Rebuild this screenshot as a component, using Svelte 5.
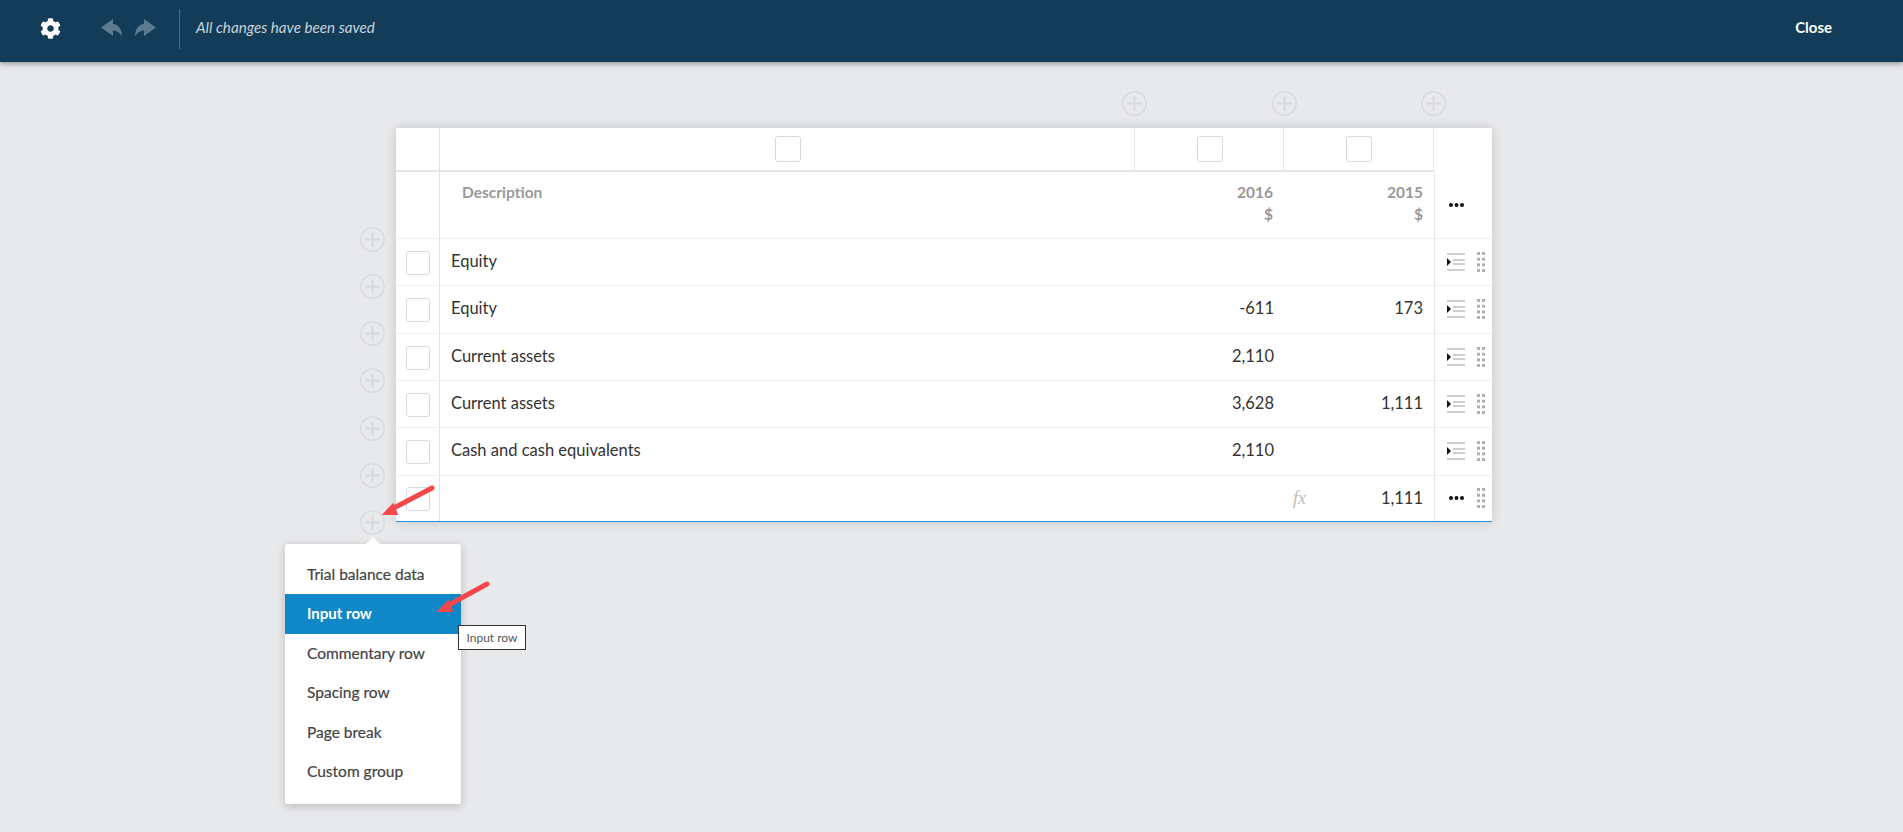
<script>
  const rows = [
    { label: 'Equity', a: '', b: '' },
    { label: 'Equity', a: '-611', b: '173' },
    { label: 'Current assets', a: '2,110', b: '' },
    { label: 'Current assets', a: '3,628', b: '1,111' },
    { label: 'Cash and cash equivalents', a: '2,110', b: '' },
    { label: '', a: '', b: '1,111', total: true }
  ];
  const menu = ['Trial balance data', 'Input row', 'Commentary row', 'Spacing row', 'Page break', 'Custom group'];
  const replyPath = 'M0 8.5L12 0V5C17 5.5 21 10 21 17C18 13 15 11.5 12 11.5V17Z';
</script>

{#snippet plus()}
  <svg class="plus" width="25" height="25" viewBox="0 0 25 25" fill="none">
    <circle cx="12.5" cy="12.5" r="11.7" stroke="#d6d8db" stroke-width="1.3" />
    <path d="M12.5 5.5v14M5.5 12.5h14" stroke="#d6d8db" stroke-width="1.8" />
  </svg>
{/snippet}

{#snippet dots()}
  <svg width="15" height="4" viewBox="0 0 15 4" fill="#111">
    <circle cx="2" cy="2" r="2" /><circle cx="7.5" cy="2" r="2" /><circle cx="13" cy="2" r="2" />
  </svg>
{/snippet}

{#snippet grip()}
  <svg width="8" height="20" viewBox="0 0 8 20" fill="#b0b0b0">
    {#each [0, 5.7, 11.4, 17] as y}
      <rect x="0" {y} width="3" height="3" /><rect x="5" {y} width="3" height="3" />
    {/each}
  </svg>
{/snippet}

{#snippet indent()}
  <svg width="18" height="18" viewBox="0 0 18 18">
    <path d="M0 1h18M6 7h12M6 11h12M0 17h18" stroke="#cfcfcf" stroke-width="2" />
    <path d="M0 5l4 4-4 4z" fill="#111" />
  </svg>
{/snippet}

<header class="topbar">
  <svg class="gear" width="21" height="21" viewBox="0 0 512 512" fill="#fff">
    <path d="M487.4 315.7l-42.6-24.6c4.3-23.2 4.3-47 0-70.2l42.6-24.6c4.9-2.8 7.1-8.6 5.5-14-11.1-35.6-30-67.8-54.7-94.6-3.8-4.1-10-5.1-14.8-2.3L380.8 110c-17.9-15.4-38.5-27.3-60.8-35.1V25.8c0-5.6-3.9-10.5-9.4-11.7-36.7-8.2-74.3-7.8-109.2 0-5.5 1.2-9.4 6.1-9.4 11.7V75c-22.2 7.9-42.8 19.8-60.8 35.1L88.7 85.5c-4.9-2.8-11-1.9-14.8 2.3-24.7 26.7-43.6 58.9-54.7 94.6-1.7 5.4.6 11.2 5.5 14L67.3 221c-4.3 23.2-4.3 47 0 70.2l-42.6 24.6c-4.9 2.8-7.1 8.6-5.5 14 11.1 35.6 30 67.8 54.7 94.6 3.8 4.1 10 5.1 14.8 2.3l42.6-24.6c17.9 15.4 38.5 27.3 60.8 35.1v49.2c0 5.6 3.9 10.5 9.4 11.7 36.7 8.2 74.3 7.8 109.2 0 5.5-1.2 9.4-6.1 9.4-11.7v-49.2c22.2-7.9 42.8-19.8 60.8-35.1l42.6 24.6c4.9 2.8 11 1.9 14.8-2.3 24.7-26.7 43.6-58.9 54.7-94.6 1.5-5.5-.7-11.3-5.6-14.1zM256 336c-44.1 0-80-35.9-80-80s35.9-80 80-80 80 35.9 80 80-35.9 80-80 80z" />
  </svg>
  <svg class="undo" width="21" height="17" viewBox="0 0 21 17" fill="#5b7b8f"><path d={replyPath} /></svg>
  <svg class="redo" width="21" height="17" viewBox="0 0 21 17" fill="#5b7b8f"><path d={replyPath} transform="matrix(-1 0 0 1 21 0)" /></svg>
  <span class="divider"></span>
  <span class="saved">All changes have been saved</span>
  <span class="close">Close</span>
</header>

<main class="board">
  <div class="row-adds">
    {#each Array(7) as _}
      {@render plus()}
    {/each}
  </div>
  <div class="sheet">
    <div class="col-adds">
      {@render plus()}
      {@render plus()}
      {@render plus()}
    </div>
    <div class="table">
      <div class="grid top">
        <div class="cell lead"></div>
        <div class="cell mid"><span class="check big"></span></div>
        <div class="cell mid"><span class="check big"></span></div>
        <div class="cell mid"><span class="check big"></span></div>
        <div class="cell"></div>
      </div>
      <div class="grid head">
        <div class="cell lead"></div>
        <div class="cell desc">Description</div>
        <div class="cell year">2016<br />$</div>
        <div class="cell year">2015<br />$</div>
        <div class="cell more">{@render dots()}</div>
      </div>
      {#each rows as row}
        <div class="grid row" class:total={row.total}>
          <div class="cell lead"><span class="check"></span></div>
          <div class="cell label">{row.label}</div>
          <div class="cell num" class:fxcell={row.total}>
            {#if row.total}<span class="fx">fx</span>{:else}{row.a}{/if}
          </div>
          <div class="cell num">{row.b}</div>
          <div class="cell tools">
            {#if row.total}{@render dots()}{:else}{@render indent()}{/if}
            {@render grip()}
          </div>
        </div>
      {/each}
    </div>
  </div>
</main>

<div class="menu">
  {#each menu as item, i}
    <div class="item" class:active={i === 1}>{item}</div>
  {/each}
</div>
<div class="tooltip">Input row</div>

<svg class="arrows" width="1903" height="832" viewBox="0 0 1903 832">
  <path d="M432 488L390 510M487 584L445 607" stroke="#f4484c" stroke-width="5" stroke-linecap="round" fill="none" />
  <path d="M381.7 515L398.3 515L393.3 502.7zM436.7 612L453.3 612L448.3 599.7z" fill="#f4484c" />
</svg>

<style>
  :global(body) {
    background: #e8e9eb;
    font-family: Lato, "Open Sans", sans-serif;
    height: 832px;
    overflow: hidden;
  }

  .topbar {
    display: flex;
    align-items: center;
    height: 62px;
    background: #123c57;
    box-shadow: 0 2px 5px rgba(0, 0, 0, 0.35);
    position: relative;
  }

  .gear {
    margin: -5px 0 0 40px;
  }

  .undo {
    margin: -8px 0 0 40px;
  }

  .redo {
    margin: -8px 0 0 13px;
  }

  .divider {
    width: 1px;
    height: 40px;
    margin: -4px 16px 0 23px;
    background: #4a6b80;
  }

  .saved {
    margin-top: -8px;
    font-size: 15.2px;
    font-style: italic;
    color: #c9d3da;
  }

  .close {
    margin: -8px 71px 0 auto;
    font-size: 15px;
    font-weight: 700;
    color: #fff;
  }

  .board {
    display: flex;
    padding: 29px 0 0 360px;
  }

  .plus {
    display: block;
    flex: none;
  }

  .row-adds {
    display: flex;
    flex-direction: column;
    gap: 22.33px;
    width: 36px;
    padding-top: 135.5px;
  }

  .col-adds {
    display: flex;
    gap: 124.5px;
    padding: 0 0 12px 726px;
  }

  .table {
    width: 1096px;
    background: #fff;
    box-shadow: 0 0 10px rgba(0, 0, 0, 0.16);
    border-bottom: 1px solid #2f92dc;
  }

  .grid {
    display: grid;
    grid-template-columns: 44px 695px 149px 150px 58px;
  }

  .head,
  .row {
    grid-template-columns: 44px 695px 149px 151px 57px;
  }

  .cell {
    min-width: 0;
  }

  .lead {
    border-right: 1px solid #e2e2e2;
    display: flex;
    align-items: center;
    justify-content: center;
  }

  .top {
    height: 44px;
  }

  .top .cell {
    border-bottom: 2px solid #e6e6e6;
  }

  .top .cell:last-child {
    border-bottom: none;
  }

  .mid {
    display: flex;
    align-items: center;
    justify-content: center;
    padding-left: 1px;
    border-right: 1px solid #e6e6e6;
  }

  .check {
    display: block;
    width: 24px;
    height: 24px;
    box-sizing: border-box;
    border: 1px solid #d6d9dd;
    border-radius: 3px;
    background: #fff;
  }

  .check.big {
    width: 26px;
    height: 26px;
  }

  .row .lead {
    padding-top: 2px;
  }

  .head {
    height: 66px;
    color: #999;
    font-size: 15.5px;
    font-weight: 700;
    line-height: 22px;
  }

  .desc {
    padding: 9px 0 0 22px;
    border-right: none;
  }

  .year {
    padding: 9px 11px 0 0;
    text-align: right;
  }

  .year:nth-child(4) {
    padding-right: 11px;
    border-right: 1px solid #e6e6e6;
  }

  .more {
    display: flex;
    justify-content: center;
    padding: 31px 15px 0 0;
  }

  .row {
    height: 47.33px;
    box-sizing: border-box;
    border-top: 1px solid #efefef;
    color: #333;
    font-size: 16.5px;
    line-height: 44px;
  }

  .total {
    height: 46.33px;
  }

  .label {
    padding-left: 11px;
  }

  .num {
    padding-right: 10px;
    text-align: right;
  }

  .num:nth-child(4) {
    padding-right: 11px;
    border-right: 1px solid #e6e6e6;
  }

  .fxcell {
    position: relative;
  }

  .fx {
    position: absolute;
    left: 158px;
    top: 0;
    font-family: "Liberation Serif", serif;
    font-style: italic;
    font-size: 18px;
    color: #bcbcbc;
  }

  .tools {
    display: flex;
    align-items: center;
    gap: 12px;
    padding-left: 12px;
  }

  .total .tools svg:first-child {
    margin: 0 1px 0 1.5px;
  }

  .menu {
    position: absolute;
    left: 285px;
    top: 544px;
    width: 176px;
    box-sizing: border-box;
    padding: 11px 0 13px;
    background: #fff;
    border-radius: 3px;
    box-shadow: 0 2px 10px rgba(0, 0, 0, 0.2);
  }

  .menu::before {
    content: "";
    position: absolute;
    left: 81px;
    top: -7px;
    border: 7px solid transparent;
    border-top: none;
    border-bottom-color: #fff;
  }

  .item {
    height: 39.4px;
    padding-left: 22px;
    font-size: 15.5px;
    line-height: 38px;
    color: #444;
    -webkit-text-stroke: 0.2px #444;
  }

  .item.active {
    background: #1088c7;
    color: #fff;
    font-size: 15px;
    font-weight: 700;
    -webkit-text-stroke: 0;
  }

  .tooltip {
    position: absolute;
    left: 458px;
    top: 625px;
    width: 68px;
    height: 25px;
    box-sizing: border-box;
    border: 1px solid #333;
    background: #fff;
    color: #555;
    font-size: 12px;
    line-height: 24px;
    text-align: center;
  }

  .arrows {
    position: absolute;
    left: 0;
    top: 0;
    pointer-events: none;
  }
</style>
